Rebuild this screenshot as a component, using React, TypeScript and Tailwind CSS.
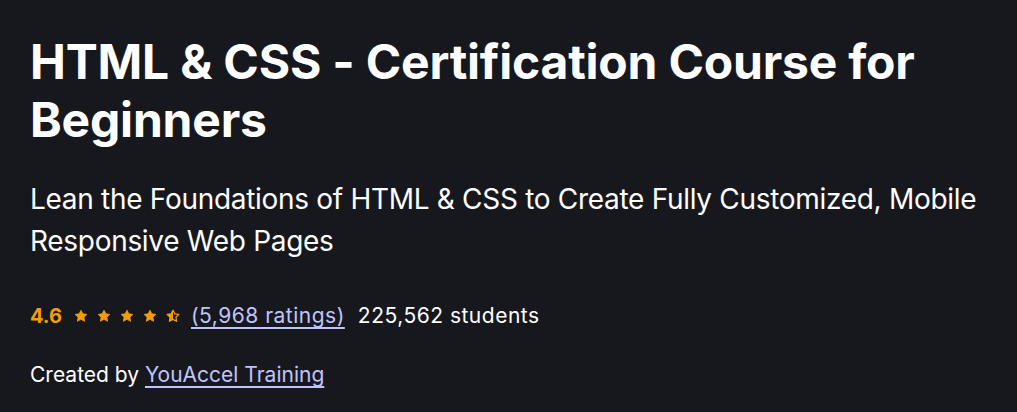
const STAR =
  "M12 2l3.09 6.26L22 9.27l-5 4.87 1.18 6.88L12 17.77l-6.18 3.25L7 14.14 2 9.27l6.91-1.01L12 2z";

const Star = ({ half = false }: { half?: boolean }) => (
  <svg width="14" height="14" viewBox="0 0 24 24" aria-hidden="true">
    {half ? (
      <>
        <defs>
          <linearGradient id="half-star">
            <stop offset="50%" stopColor="#f69c08" />
            <stop offset="50%" stopColor="transparent" />
          </linearGradient>
        </defs>
        <path d={STAR} fill="url(#half-star)" stroke="#f69c08" strokeWidth="2.2" strokeLinejoin="round" />
      </>
    ) : (
      <path d={STAR} fill="#f69c08" stroke="#f69c08" strokeWidth="1.4" strokeLinejoin="round" />
    )}
  </svg>
);

const App = () => {
  return (
    <div className="min-h-[412px] w-full bg-[#17181e] font-['Inter',sans-serif] text-white">
      <div className="w-[990px] pl-[30px] pt-[33px]">
        <h1 className="text-[48px] font-bold leading-[1.2] tracking-[-0.2px]">
          HTML &amp; CSS - Certification Course for Beginners
        </h1>

        <p className="mt-[30px] text-[28px] font-normal leading-[42px] tracking-[-0.3px]">
          Lean the Foundations of HTML &amp; CSS to Create Fully Customized, Mobile Responsive Web Pages
        </p>

        <div className="mt-[40px] flex items-center text-[21px] leading-[28px]">
          <span className="text-[20px] font-bold text-[#f69c08]">4.6</span>
          <div className="ml-[12px] flex items-center gap-[9px]">
            <Star />
            <Star />
            <Star />
            <Star />
            <Star half />
          </div>
          <a href="#" className="ml-[11px] tracking-[0.5px] text-[#c0c4fc] underline underline-offset-[4px]">
            (5,968 ratings)
          </a>
          <span className="ml-[13px] tracking-[0.5px]">225,562 students</span>
        </div>

        <div className="mt-[31px] text-[21px] leading-[28px]">
          Created by{" "}
          <a href="#" className="text-[#c0c4fc] underline underline-offset-[4px]">
            YouAccel Training
          </a>
        </div>
      </div>
    </div>
  );
};

export default App;
